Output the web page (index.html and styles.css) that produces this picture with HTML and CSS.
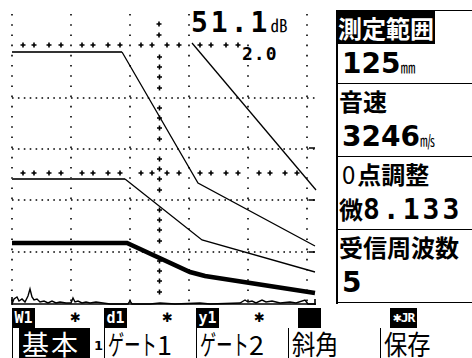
FILE: index.html
```html
<!DOCTYPE html>
<html>
	<head>
		<title>探傷器</title>
		<link rel="stylesheet" href="styles.css">
	</head>
	<body>
		<div class="screen">
			<div class="top">
				<div class="scope">
					<svg class="plot" width="336" height="305" viewBox="0 0 336 305">
						<defs>
							<pattern id="prow" patternUnits="userSpaceOnUse" x="12" y="41" width="59" height="8">
								<path d="M8.5 4h5M11 1.5v5M19.5 4h5M22 1.5v5M34.5 4h5M37 1.5v5M46.5 4h5M49 1.5v5" stroke="#000" stroke-width="1.6"/>
							</pattern>
							<pattern id="pcol" patternUnits="userSpaceOnUse" x="156" y="47" width="7" height="51">
								<path d="M1 10h5M3.5 7.5v5M1 20h5M3.5 17.5v5M1 30h5M3.5 27.5v5M1 41h5M3.5 38.5v5" stroke="#000" stroke-width="1.6"/>
							</pattern>
						</defs>
						<!-- grid -->
						<path d="M12 14V304M71 14V304M130 14V304M189 14V304M248 14V304M307 14V304" stroke="#000" stroke-width="1.6" stroke-dasharray="1.6 8.6"/>
						<path d="M12 98H316M12 149H316M12 200H316M12 252H316" stroke="#000" stroke-width="1.6" stroke-dasharray="1.6 4.3"/>
						<path d="M309 148h6M309 200h6M309 252h6" stroke="#000" stroke-width="1.4"/>
						<rect x="12" y="41" width="236" height="8" fill="url(#prow)"/>
						<rect x="12" y="169" width="295" height="8" fill="url(#prow)"/>
						<rect x="156" y="47" width="7" height="255" fill="url(#pcol)"/>
						<path d="M156.5 24h5M159 21.5v5M156.5 35h5M159 32.5v5" stroke="#000" stroke-width="1.6"/>
						<!-- echo curves -->
						<polyline points="12,52 122,52" fill="none" stroke="#333" stroke-width="2.2"/>
						<polyline points="122,52 198,183 315,246" fill="none" stroke="#000" stroke-width="1.3"/>
						<polyline points="12,179 125,179" fill="none" stroke="#333" stroke-width="2.2"/>
						<polyline points="125,179 202,240 315,272" fill="none" stroke="#000" stroke-width="1.3"/>
						<polyline points="192,43 316,190" fill="none" stroke="#000" stroke-width="1.3"/>
						<polyline points="12,243 127,243 190,272 205,276 315,293" fill="none" stroke="#000" stroke-width="4.6"/>
						<!-- baseline noise -->
						<polyline points="12,304 14,299 17,297 19,301 22,299 25,302 28,296 30,289 32,297 34,300 37,299 40,302 44,301 48,303 52,301 56,303 60,302 66,303 71,303 73,298 75,302 78,301 82,303 86,302 90,303 96,302 110,304 128,304 130,301 132,304 150,304 160,303 175,304 200,303 210,304 240,303 245,300 248,302 252,301 256,303 262,300 266,302 272,301 280,303 290,302 296,303 305,300 308,304 315,304" fill="none" stroke="#000" stroke-width="1.4"/>
						<path d="M12 304H316M12 297V305M315 299V305" stroke="#000" stroke-width="1.6"/>
					</svg>
					<div class="gain">51.1<span class="unit">㏈</span></div>
					<div class="step">2.0</div>
				</div>
				<div class="panel">
					<div class="label head"><span>測定範囲</span></div>
					<div class="value">125<span class="unit">㎜</span></div>
					<div class="label">音速</div>
					<div class="value">3246<span class="unit">㎧</span></div>
					<div class="label"><span class="zero">0</span>点調整</div>
					<div class="value"><span class="fine">微</span><span class="mono">8.133</span></div>
					<div class="label">受信周波数</div>
					<div class="value">5</div>
				</div>
			</div>
			<div class="status">
				<div class="slot"><span class="tag">W1</span><span class="star">✱</span></div>
				<div class="slot"><span class="tag">d1</span><span class="star">✱</span></div>
				<div class="slot"><span class="tag">y1</span><span class="star">✱</span></div>
				<div class="slot"><span class="tag blank"></span></div>
				<div class="slot"><span class="tag wide"><span class="mini">✱</span>JR</span></div>
			</div>
			<div class="menu">
				<div class="tab first"><span class="on">基本</span><span class="page">1</span></div>
				<div class="tab"><span class="kana">ゲート</span>1</div>
				<div class="tab"><span class="kana">ゲート</span>2</div>
				<div class="tab"><span class="narrow">斜角</span></div>
				<div class="tab"><span class="narrow">保存</span></div>
			</div>
		</div>
	</body>
</html>
```

FILE: styles.css
```css
* {
	box-sizing: border-box;
}
body {
	margin: 0;
	width: 472px;
	height: 358px;
	overflow: hidden;
	background: #fff;
	color: #000;
	font-family: "Noto Sans CJK JP", sans-serif;
}
.screen {
	width: 472px;
	height: 358px;
	display: flex;
	flex-direction: column;
}
.top {
	display: flex;
	height: 305px;
}
.scope {
	position: relative;
	width: 336px;
	height: 305px;
}
.plot {
	display: block;
}
.gain {
	position: absolute;
	left: 191px;
	top: 8px;
	font: bold 28px/30px "DejaVu Sans Mono", monospace;
	letter-spacing: 3px;
	background: #fff;
	padding-right: 2px;
}
.gain .unit {
	font: 17px "Noto Sans CJK JP", sans-serif;
	letter-spacing: 0;
}
.step {
	position: absolute;
	left: 242px;
	top: 45px;
	font: bold 18px/18px "DejaVu Sans Mono", monospace;
	letter-spacing: 1px;
}
.panel {
	width: 136px;
	height: 294px;
	margin-top: 10px;
	border-left: 2px solid #000;
	border-top: 1px solid #000;
}
.label {
	height: 33px;
	padding-left: 1px;
	font: bold 24px/33px "Noto Sans CJK JP", sans-serif;
	white-space: nowrap;
}
.head span {
	display: inline-block;
	height: 33px;
	background: #000;
	color: #fff;
	margin-left: -1px;
	padding-right: 1px;
}
.zero {
	font-weight: normal;
	margin-left: 3px;
	margin-right: 2px;
}
.value {
	height: 40px;
	border-bottom: 1.5px solid #000;
	padding-left: 4px;
	font: bold 28px/40px "DejaVu Sans", sans-serif;
	white-space: nowrap;
}
.value .unit {
	font: 15px "Noto Sans CJK JP", sans-serif;
}
.fine {
	font: bold 24px "Noto Sans CJK JP", sans-serif;
	margin-left: -3px;
}
.mono {
	font: bold 28px "DejaVu Sans Mono", monospace;
	letter-spacing: 3px;
}
.status {
	display: flex;
	height: 23px;
	padding-left: 12px;
	align-items: flex-end;
}
.slot {
	width: 95px;
	height: 20px;
	display: flex;
	align-items: center;
}
.tag {
	height: 20px;
	width: 23px;
	background: #000;
	color: #fff;
	font: bold 15px/20px "DejaVu Sans Mono", monospace;
	text-align: center;
}
.blank {
	margin-left: 10px;
}
.wide {
	width: 27px;
	margin-left: 10px;
	font-size: 13px;
	letter-spacing: -1px;
}
.mini {
	font: 11px "DejaVu Sans", sans-serif;
}
.star {
	font: 13px/20px "DejaVu Sans", sans-serif;
	margin-left: 35px;
}
.menu {
	display: flex;
	height: 30px;
	padding-left: 12px;
	overflow: hidden;
	font: 27px/27px "Noto Sans CJK JP", sans-serif;
}
.tab {
	width: 95px;
	border-left: 1.5px solid #000;
	padding-top: 2px;
	padding-left: 3px;
	display: flex;
	white-space: nowrap;
}
.first {
	padding-left: 6px;
	padding-top: 0;
}
.on {
	display: block;
	background: #000;
	color: #fff;
	height: 30px;
	padding: 2px 10px 0 3px;
	letter-spacing: 2px;
}
.page {
	font: bold 13px/13px "DejaVu Sans", sans-serif;
	margin: 11px 0 0 auto;
	padding-right: 1px;
}
.kana {
	display: inline-block;
	transform: scaleX(.6);
	transform-origin: left;
	margin-right: -32px;
}
.narrow {
	display: inline-block;
	transform: scaleX(.86);
	transform-origin: left;
}
```
